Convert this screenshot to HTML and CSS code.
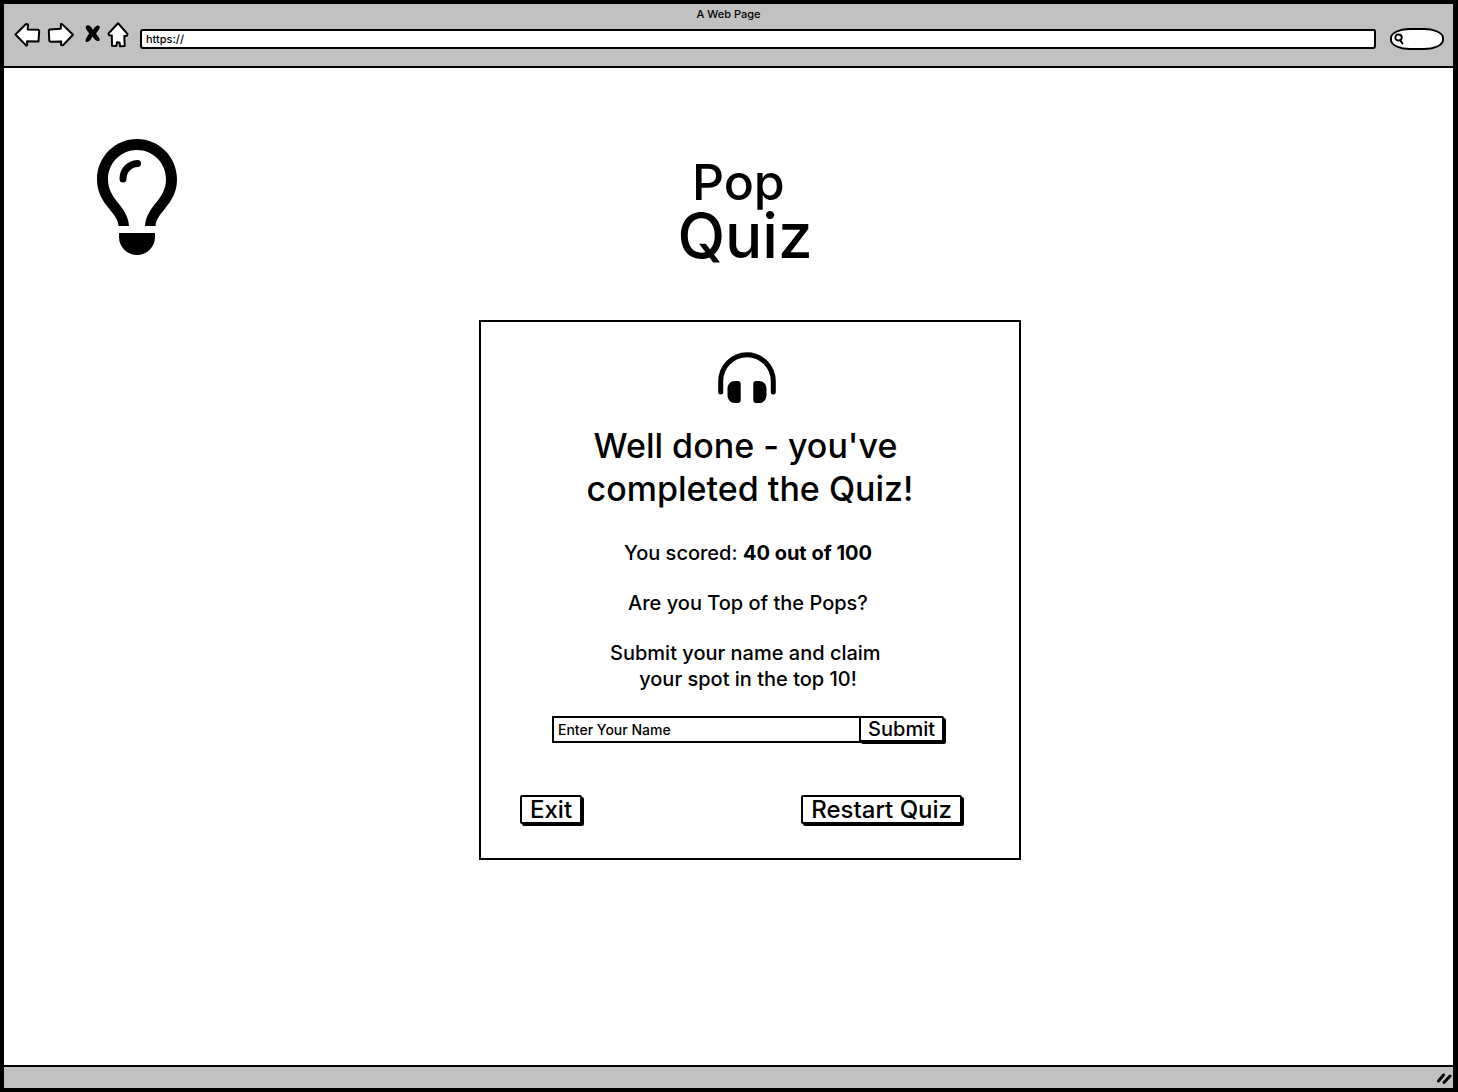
FILE: index.html
```html
<!DOCTYPE html>
<html lang="en">
<head>
<meta charset="utf-8">
<title>A Web Page</title>
<link rel="stylesheet" href="styles.css">
</head>
<body>
<div class="browser">
  <header class="toolbar">
    <div class="window-title">A Web Page</div>
    <div class="controls">
      <nav class="nav-buttons" aria-label="Browser">
        <button type="button" class="icon-button" aria-label="Back">
          <svg width="28" height="28" viewBox="0 0 28 28"><path class="outline" d="M2.500 13.500L13 3l2 .5-.3 5 10.800.2.700 1-.7 10.800-11.500-.2.300 3.700-1 .6z"/></svg>
        </button>
        <button type="button" class="icon-button" aria-label="Forward">
          <svg width="28" height="28" viewBox="0 0 28 28"><path class="outline" d="M1.800 9.500l.6-1 11.300-.7.200-4.800 1.500.4L26 13.800 16 24.300l-2-.3.300-3.500-10.800.2-1.200-.7z"/></svg>
        </button>
        <button type="button" class="icon-button narrow" aria-label="Stop">
          <svg width="18" height="28" viewBox="0 0 18 28"><path d="M2 5c2-2 5-.5 7 4 2-4 4.500-5.500 6.500-4 1 1-.5 4-3.500 7.500 2 3 4.500 5.500 3.500 7-2 1.500-5-.5-7-4-1.500 3-3.500 6-6 5.500C.5 20 2 17 5.300 12.500 2.500 9 1 6.500 2 5z"/></svg>
        </button>
        <button type="button" class="icon-button home" aria-label="Home">
          <svg width="24" height="28" viewBox="0 0 24 28"><path class="outline" d="M12 2.200L21.500 13l-.5 1.800-2.700.2.400 10-4.700.2-.5-3.700-2.500-.2-.7 3.700-4.300-.2-.2-10.300-2.800-.3-.5-1.700z"/></svg>
        </button>
      </nav>
      <input class="address" type="text" value="https://" aria-label="Address">
      <label class="search">
        <svg width="10" height="12" viewBox="0 0 10 12"><path class="lens" d="M4.500 1.500C2 1.500 1.200 3.200 1.400 5c.2 1.800 1.600 2.600 3.300 2.400C6.800 7.200 8 6 7.700 4 7.500 2.200 6.300 1.500 4.500 1.500zM6 7l2.500 3.500"/></svg>
        <input type="search" aria-label="Search">
      </label>
    </div>
  </header>

  <main class="page">
    <div class="masthead">
      <svg class="bulb" width="80" height="116" viewBox="0 0 80 116" role="img" aria-label="Light bulb">
        <path fill-rule="evenodd" d="M40 0C62 0 80 18 80 40c0 13-5 21-12 29.500C62 77 59 81 58.500 87H48c.5-8 4-14.500 10-22 7-8.500 11-15 11-25C69 24 56 11 40 11S11 24 11 40c0 10 4 16.500 11 25 6 7.500 9.500 14 10 22H21.500C21 81 18 77 12 69.500 5 61 0 53 0 40 0 18 18 0 40 0z"/>
        <path d="M22 94h36v4c0 10-8 18-18 18s-18-8-18-18z"/>
        <path class="glint" d="M26 40c0-8.500 6-15 14.500-15.500"/>
      </svg>
      <h1 class="logo"><span class="logo-pop">Pop&nbsp;</span><span class="logo-quiz">Quiz</span></h1>
    </div>

    <section class="card">
      <svg class="headphones" width="58" height="52" viewBox="0 0 58 52" role="img" aria-label="Headphones">
        <path class="band" d="M2.700 40V29.500a26.300 26.800 0 0 1 52.600 0V40"/>
        <path d="M17 29h3c1.700 0 2.700 1 2.700 2.700v16.600c0 1.700-1 2.700-2.700 2.700h-3c-4.500 0-7.500-3.500-7.500-8v-6c0-4.500 3-8 7.500-8zM41 29h-3c-1.700 0-2.700 1-2.700 2.700v16.600c0 1.700 1 2.700 2.700 2.700h3c4.500 0 7.500-3.500 7.500-8v-6c0-4.500-3-8-7.500-8z"/>
      </svg>
      <h2 class="headline">Well done - you've&nbsp;<br>completed the Quiz!</h2>
      <p class="text">You scored: <strong>40 out of 100</strong></p>
      <p class="text">Are you Top of the Pops?</p>
      <p class="text">Submit your name and claim&nbsp;<br>your spot in the top 10!</p>
      <form class="name-form">
        <input class="name" type="text" placeholder="Enter Your Name" aria-label="Enter Your Name">
        <button type="submit" class="button submit">Submit</button>
      </form>
      <div class="actions">
        <button type="button" class="button">Exit</button>
        <button type="button" class="button">Restart Quiz</button>
      </div>
    </section>
  </main>

  <footer class="statusbar">
    <svg width="16" height="14" viewBox="0 0 16 14" aria-hidden="true"><path class="grip" d="M2.500 10L7.500 4M8 11.500L14 5"/></svg>
  </footer>
</div>
</body>
</html>
```
FILE: styles.css
```css
* {
  box-sizing: border-box;
}

body {
  margin: 0;
  color: #000;
  background: #fff;
  font-family: Inter, "Liberation Sans", sans-serif;
  font-size: 20px;
  font-weight: 500;
}

button,
input {
  margin: 0;
  padding: 0;
  color: inherit;
  font: inherit;
  background: none;
  border: 0;
  border-radius: 0;
}

svg {
  display: block;
  flex: none;
}

.browser {
  display: flex;
  flex-direction: column;
  min-height: 100vh;
  border: 4px solid #000;
  border-right-width: 5px;
}

.toolbar {
  padding: 3px 9px 0;
  height: 64px;
  background: #c1c1c1;
  border-bottom: 2px solid #000;
}

.window-title {
  font-size: 11px;
  line-height: 14px;
  text-align: center;
}

.controls {
  display: flex;
  align-items: center;
  height: 28px;
}

.nav-buttons {
  display: flex;
  gap: 6px;
  margin-right: 10px;
}

.icon-button.narrow {
  margin-left: 3px;
}

.icon-button.home {
  margin-left: -2px;
}

.outline {
  fill: #fff;
  stroke: #000;
  stroke-width: 2;
  stroke-linejoin: round;
}

.address {
  flex: 1;
  margin-top: 8px;
  padding: 0 4px;
  height: 20px;
  font-size: 11px;
  background: #fff;
  border: 2px solid #000;
  border-radius: 3px 2px 3px 3px;
}

.search {
  display: flex;
  align-items: center;
  margin: 8px 0 0 14px;
  padding-left: 2px;
  width: 54px;
  height: 22px;
  background: #fff;
  border: 2px solid #000;
  border-radius: 20px / 10px;
}

.search input {
  width: 32px;
  outline: 0;
}

.lens {
  fill: none;
  stroke: #000;
  stroke-width: 2;
  stroke-linecap: round;
}

.page {
  flex: 1;
  padding: 71px 50px 64px 93px;
}

.masthead {
  display: grid;
  grid-template-columns: 1fr auto 1fr;
  align-items: start;
}

.glint {
  fill: none;
  stroke: #000;
  stroke-width: 7;
  stroke-linecap: round;
}

.logo {
  display: flex;
  flex-direction: column;
  margin: 16px 0 0;
  padding-right: 10px;
  font-weight: 500;
  line-height: 54px;
  text-align: center;
}

.logo-pop {
  font-size: 50px;
}

.logo-quiz {
  font-size: 62px;
}

.card {
  display: flex;
  flex-direction: column;
  align-items: center;
  margin: 57px auto 0;
  padding: 30px 38px 34px;
  width: 542px;
  max-width: 100%;
  border: 2px solid #000;
}

.headphones {
  margin-right: 6px;
}

.band {
  fill: none;
  stroke: #000;
  stroke-width: 5;
  stroke-linecap: round;
}

.headline {
  margin: 20px 0 30px;
  font-size: 34px;
  font-weight: 500;
  line-height: 43px;
  text-align: center;
}

.text {
  margin: 0 4px 24px 0;
  line-height: 26px;
  text-align: center;
}

.name-form {
  display: flex;
  margin-right: 4px;
  width: 392px;
  max-width: 100%;
}

.name {
  flex: 1;
  min-width: 0;
  padding: 0 4px;
  height: 27px;
  font-size: 14px;
  border: 2px solid #000;
}

.name::placeholder {
  color: #000;
  opacity: 1;
}

.button {
  padding: 0 8px;
  height: 29px;
  font-size: 24px;
  line-height: 24px;
  background: #fff;
  border: 2px solid #000;
  border-radius: 2px;
  box-shadow: 2px 2px 0 #000;
}

.submit {
  margin-left: -2px;
  padding: 0 7px;
  height: 26px;
  font-size: 20px;
  line-height: 22px;
}

.actions {
  display: flex;
  justify-content: space-between;
  align-self: stretch;
  margin: 52px 19px 0 1px;
}

.statusbar {
  display: flex;
  align-items: center;
  justify-content: flex-end;
  padding-right: 1px;
  height: 23px;
  background: #c1c1c1;
  border-top: 2px solid #000;
}

.grip {
  fill: none;
  stroke: #000;
  stroke-width: 3;
  stroke-linecap: round;
}
```
